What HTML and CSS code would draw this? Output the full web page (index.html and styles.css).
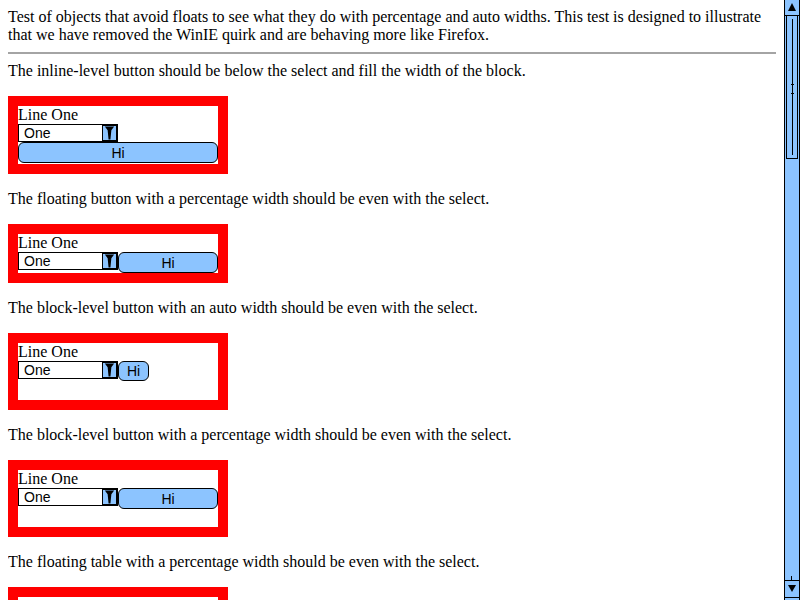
FILE: index.html
```html
<!DOCTYPE html>
<html>
<head>
<meta charset="utf-8">
<title>Objects avoiding floats</title>
<link rel="stylesheet" href="styles.css">
</head>
<body>
<div class="intro">Test of objects that avoid floats to see what they do with percentage and auto widths. This test is designed to illustrate that we have removed the WinIE quirk and are behaving more like Firefox.</div>
<hr>
<p>The inline-level button should be below the select and fill the width of the block.</p>
<div class="box box-a">
  <div class="line">Line One</div>
  <div class="sel"><span class="val">One</span><span class="arrow"><svg width="14" height="16" viewBox="0 0 14 16"><polygon points="2,1 12,1 9,5 8,15 6,15 5,5" fill="#000"/></svg></span></div>
  <div class="btn btn-full">Hi</div>
</div>
<p>The floating button with a percentage width should be even with the select.</p>
<div class="box box-b">
  <div class="line">Line One</div>
  <div class="row">
    <div class="sel"><span class="val">One</span><span class="arrow"><svg width="14" height="16" viewBox="0 0 14 16"><polygon points="2,1 12,1 9,5 8,15 6,15 5,5" fill="#000"/></svg></span></div>
    <div class="btn btn-half">Hi</div>
  </div>
</div>
<p>The block-level button with an auto width should be even with the select.</p>
<div class="box box-c">
  <div class="line">Line One</div>
  <div class="row">
    <div class="sel"><span class="val">One</span><span class="arrow"><svg width="14" height="16" viewBox="0 0 14 16"><polygon points="2,1 12,1 9,5 8,15 6,15 5,5" fill="#000"/></svg></span></div>
    <div class="btn btn-auto">Hi</div>
  </div>
</div>
<p>The block-level button with a percentage width should be even with the select.</p>
<div class="box box-c">
  <div class="line">Line One</div>
  <div class="row">
    <div class="sel"><span class="val">One</span><span class="arrow"><svg width="14" height="16" viewBox="0 0 14 16"><polygon points="2,1 12,1 9,5 8,15 6,15 5,5" fill="#000"/></svg></span></div>
    <div class="btn btn-half">Hi</div>
  </div>
</div>
<p>The floating table with a percentage width should be even with the select.</p>
<div class="box box-c"></div>

<div class="sb">
  <div class="sb-up"><svg width="14" height="15" viewBox="0 0 14 15"><polygon points="7,3 11,11 3,11" fill="#000"/></svg></div>
  <div class="sb-thumb"><span class="grip"></span></div>
  <div class="sb-track"></div>
  <div class="sb-down"><svg width="14" height="16" viewBox="0 0 14 16"><polygon points="3,4 11,4 7,11" fill="#000"/></svg></div>
</div>
</body>
</html>
```
FILE: styles.css
```css
html { background: #fff; }
body {
  margin: 8px 24px 8px 8px;
  font: 16px/18px "Liberation Serif", "Times New Roman", serif;
  color: #000;
  overflow: hidden;
}
hr {
  border: 0;
  border-top: 2px solid #a4a4a4;
  height: 0;
  margin: 8px 0;
}
p { margin: 0 0 16px; }

.box {
  width: 200px;
  border: 10px solid #ff0000;
  margin-bottom: 16px;
  background: #fff;
}
.box-a { padding-bottom: 1px; }
.box-b { height: 39px; }
.box-c { height: 57px; }

.line { height: 18px; }
.row { display: flex; align-items: flex-start; }

.sel {
  display: flex;
  width: 100px;
  height: 18px;
  box-sizing: border-box;
  border: 1px solid #000;
  background: #fff;
  font: 14px/17px "Liberation Sans", Arial, sans-serif;
}
.sel .val { flex: 1; padding-left: 5px; }
.sel .arrow {
  width: 16px;
  margin: -1px -1px -1px 0;
  box-sizing: border-box;
  border: 2px solid #000;
  border-left-width: 1px;
  background: #8cc4ff;
  display: flex;
  align-items: center;
  justify-content: center;
}
.btn {
  box-sizing: border-box;
  height: 21px;
  border: 1px solid #000;
  border-radius: 6px;
  background: #8cc4ff;
  font: 14px/20px "Liberation Sans", Arial, sans-serif;
  text-align: center;
}
.btn-full { width: 200px; }
.btn-half { width: 100px; }
.btn-auto { padding: 0 8px; height: 20px; line-height: 19px; }

.sb {
  position: fixed;
  top: 0;
  right: 0;
  width: 16px;
  height: 600px;
  box-sizing: border-box;
  border-left: 1px solid #000;
  border-right: 1px solid #000;
  background: #8cc4ff;
  display: flex;
  flex-direction: column;
}
.sb-up {
  height: 16px;
  box-sizing: border-box;
  border-bottom: 1px solid #000;
  display: flex;
  justify-content: center;
}
.sb-thumb {
  position: relative;
  height: 143px;
  margin: 0 1px;
  box-sizing: border-box;
  border-left: 1px solid #000;
  border-right: 1px solid #000;
  border-bottom: 1px solid #000;
}
.sb-thumb::before {
  content: "";
  position: absolute;
  left: 5px;
  top: 3px;
  bottom: 3px;
  width: 1px;
  background: #000;
}
.grip {
  position: absolute;
  left: 4px;
  top: 68px;
  width: 3px;
  height: 8px;
  border-top: 1px solid #000;
  border-bottom: 1px solid #000;
}
.sb-track { flex: 1; position: relative; }
.sb-track::after {
  content: "";
  position: absolute;
  left: 6px;
  bottom: 0;
  width: 1px;
  height: 4px;
  background: #000;
}
.sb-down {
  height: 18px;
  box-sizing: border-box;
  border-top: 1px solid #000;
  border-bottom: 1px solid #000;
  margin-bottom: 2px;
  display: flex;
  justify-content: center;
}
```
